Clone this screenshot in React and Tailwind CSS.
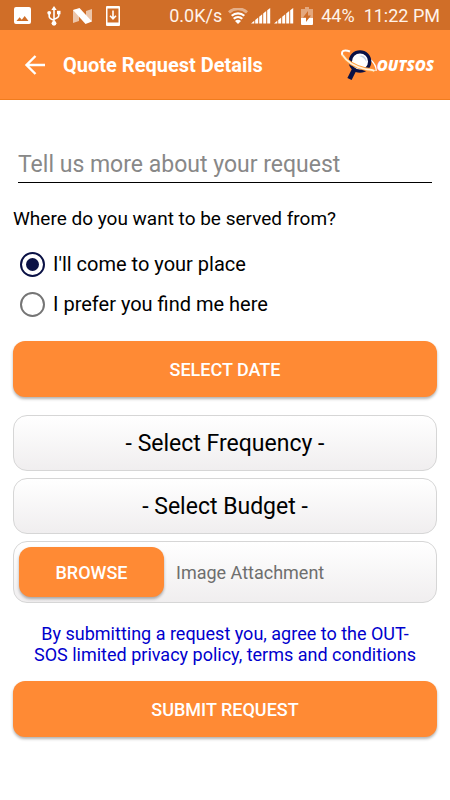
import { useRef, useState } from "react";

const places = [
  { value: "client", label: "I'll come to your place" },
  { value: "provider", label: "I prefer you find me here" },
];

const SignalIcon = () => (
  <svg className="h-4 w-5" viewBox="0 0 20 16" fill="#fff" aria-hidden="true">
    <path d="M0 15.500l3.300-2.800v2.800zM4.200 12l3-2.500v6H4.200zM8.200 8.800l3-2.500v9.200h-3zM12.200 5.500l3-2.500v12.500h-3zM16.200 2.300l3-2.300v15.500h-3z" />
  </svg>
);

const StatusBar = () => (
  <div className="flex h-[30px] items-center justify-between bg-[#d06e28] pt-px pr-[10px] pl-[14px] text-[18px] leading-5 text-[#fff3ea]">
    <div className="flex items-center">
      <svg className="h-[17px] w-[17px]" viewBox="0 0 17 17" aria-hidden="true">
        <path
          fill="#fff"
          fillRule="evenodd"
          d="M2 0h13a2 2 0 0 1 2 2v13a2 2 0 0 1-2 2H2a2 2 0 0 1-2-2V2a2 2 0 0 1 2-2zM2.500 14h12L10.700 9l-2.900 3.800L5.600 10.200z"
        />
      </svg>
      <svg
        className="ml-4 h-5 w-[14px]"
        viewBox="0 0 14 20"
        fill="#fff"
        aria-hidden="true"
      >
        <path d="M7 0l2.700 4H4.300z" />
        <path
          d="M7 3v14M2.200 7.500v3c0 1.600 1 2.500 4.800 3.800M11.800 7v2.500c0 1.600-1 2.500-4.800 3.700"
          fill="none"
          stroke="#fff"
          strokeWidth="1.600"
        />
        <circle cx="7" cy="17.300" r="2.400" />
        <circle cx="2.200" cy="6.800" r="1.900" />
        <path d="M10 4.800h3.500v3.500H10z" />
      </svg>
      <svg
        className="ml-3 h-4 w-[19px]"
        viewBox="0 0 19 16"
        fill="#fff"
        aria-hidden="true"
      >
        <path opacity="0.600" d="M0 2l6-1v12l-6 2zM13 3l6-2v12l-6 2z" />
        <path d="M0 2l6.500-2L19 13.500 12.500 16z" />
      </svg>
      <svg
        className="ml-[14px] h-5 w-[14px]"
        viewBox="0 0 14 20"
        aria-hidden="true"
      >
        <path
          fill="#fff"
          fillRule="evenodd"
          d="M1 0h12a1 1 0 0 1 1 1v18a1 1 0 0 1-1 1H1a1 1 0 0 1-1-1V1a1 1 0 0 1 1-1zM1.500 2.500v14h11v-14z"
        />
        <path
          d="M7 4.500v8M4 9.800l3 3 3-3"
          fill="none"
          stroke="#fff"
          strokeWidth="1.600"
        />
      </svg>
    </div>
    <div className="flex items-center">
      <span>0.0K/s</span>
      <svg
        className="ml-[6px] h-4 w-5"
        viewBox="0 0 20 16"
        fill="none"
        stroke="#fff"
        strokeWidth="2.200"
        aria-hidden="true"
      >
        <path opacity="0.450" d="M1 4.300a13.500 13.500 0 0 1 18 0" strokeWidth="3" />
        <path d="M3.700 7.800a9.500 9.500 0 0 1 12.600 0" />
        <path d="M5.700 10.800a6.500 6.500 0 0 1 8.600 0" />
        <path d="M7 13a4.500 4.500 0 0 1 6 0l-3 3z" fill="#fff" stroke="none" />
      </svg>
      <div className="ml-[3px] flex gap-[3px]">
        <SignalIcon />
        <SignalIcon />
      </div>
      <svg
        className="ml-[7px] h-[18px] w-3"
        viewBox="0 0 12 18"
        fill="#fff"
        aria-hidden="true"
      >
        <path opacity="0.400" d="M4 0h4v2h4v9H0V2h4z" />
        <path d="M0 11h12v6a1 1 0 0 1-1 1H1a1 1 0 0 1-1-1z" />
        <path fill="#d06e28" d="M7 4v4.500h3L5 15v-4.500H2z" />
      </svg>
      <span className="ml-2">44%</span>
      <span className="ml-[9px]">11:22 PM</span>
    </div>
  </div>
);

const Logo = () => (
  <div className="flex items-center" role="img" aria-label="Outsos">
    <svg className="h-8 w-9" viewBox="0 0 36 32" fill="none" aria-hidden="true">
      <path
        d="M9 2.500C3 0-.2 2 1.500 6.500"
        stroke="#fff"
        strokeWidth="2"
      />
      <path d="M30 11c3.500 3.500 5.500 7.500 5 11" stroke="#fff" strokeWidth="1.300" />
      <path d="M13.500 20L8.500 30" stroke="#0a1145" strokeWidth="4.800" />
      <circle cx="19" cy="12.500" r="9.700" fill="#fff" stroke="#0a1145" strokeWidth="3.300" />
      <path d="M18 7c4-2 8 1.500 7.500 6-2-3.500-4-5-7.500-6z" fill="#c9d4e6" />
      <path
        d="M1.500 6C6 13 15 18 24 20c4.500 1 7.500.5 9.500 2"
        stroke="#ff9d3c"
        strokeWidth="3.600"
      />
      <path
        d="M1.500 6C6 13 15 18 24 20c4.500 1 7.500.5 9.500 2"
        stroke="#fff1dc"
        strokeWidth="1.700"
      />
    </svg>
    <span className="font-['Open_Sans','Noto_Sans',sans-serif] text-[15px] leading-5 font-extrabold text-white italic">
      OUTSOS
    </span>
  </div>
);

const primaryButton =
  "rounded-xl bg-[#ff8a34] text-[18px] font-medium text-white uppercase shadow-[0_2px_3px_rgba(0,0,0,0.3)]";
const panel =
  "rounded-[14px] border border-[#d6d6d6] bg-linear-to-b from-white to-[#f0eeef]";
const selectBox =
  "h-14 w-full appearance-none pt-[2px] text-center text-[23px] [text-align-last:center]";

const App = () => {
  const [place, setPlace] = useState("client");
  const [fileName, setFileName] = useState("Image Attachment");
  const fileInput = useRef(null);

  return (
    <div className="min-h-screen bg-white font-[Roboto,sans-serif] text-black">
      <StatusBar />
      <header className="flex h-[70px] items-center border-b border-[#f07c1e] bg-[#ff8a34] pr-4 pl-6">
        <button type="button" aria-label="Back">
          <svg
            className="h-5 w-[21px]"
            viewBox="0 0 21 20"
            fill="none"
            stroke="#fff"
            strokeWidth="2.400"
            aria-hidden="true"
          >
            <path d="M21 10H3M11.500 1L2.500 10l9 9" />
          </svg>
        </button>
        <h1 className="ml-[18px] flex-1 text-[20px] font-bold text-white">
          Quote Request Details
        </h1>
        <Logo />
      </header>

      <form
        className="px-[13px] pt-[43px]"
        onSubmit={(e) => e.preventDefault()}
      >
        <div className="px-[5px]">
          <input
            type="text"
            aria-label="Tell us more about your request"
            placeholder="Tell us more about your request"
            className="block h-10 w-full border-b border-black pt-[3px] text-[23px] placeholder:text-[#888] focus:outline-none"
          />
        </div>

        <fieldset className="mt-6">
          <legend className="text-[19px] leading-6">
            Where do you want to be served from?
          </legend>
          <div className="mt-[13px]">
            {places.map(({ value, label }) => (
              <label
                key={value}
                className="flex h-10 items-center gap-2 pl-[7px] text-[20px]"
              >
                <input
                  type="radio"
                  name="place"
                  value={value}
                  checked={place === value}
                  onChange={() => setPlace(value)}
                  className="grid h-[25px] w-[25px] appearance-none place-content-center rounded-full border-2 border-[#757575] before:h-[13px] before:w-[13px] before:rounded-full checked:border-[#0a1145] checked:before:bg-[#0a1145]"
                />
                {label}
              </label>
            ))}
          </div>
        </fieldset>

        <button
          type="button"
          className={`${primaryButton} mt-[17px] block h-14 w-full`}
        >
          Select Date
        </button>

        <div className="mt-[18px] flex flex-col gap-[7px]">
          <select aria-label="Frequency" className={`${panel} ${selectBox}`}>
            <option>- Select Frequency -</option>
          </select>
          <select aria-label="Budget" className={`${panel} ${selectBox}`}>
            <option>- Select Budget -</option>
          </select>
          <div className={`${panel} flex items-center gap-3 p-[5px]`}>
            <button
              type="button"
              onClick={() => fileInput.current.click()}
              className={`${primaryButton} h-[50px] w-[145px]`}
            >
              Browse
            </button>
            <input
              ref={fileInput}
              type="file"
              accept="image/*"
              aria-label="Image attachment"
              className="hidden"
              onChange={(e) =>
                setFileName(e.target.files[0]?.name ?? "Image Attachment")
              }
            />
            <span className="text-[18px] text-[#6e6e6e]">{fileName}</span>
          </div>
        </div>

        <a
          href="#terms"
          className="mt-5 block text-center text-[18px] leading-[21px] text-[#0000cd]"
        >
          By submitting a request you, agree to the OUT-
          <br />
          SOS limited privacy policy, terms and conditions
        </a>

        <button
          type="submit"
          className={`${primaryButton} mt-4 mb-6 block h-14 w-full`}
        >
          Submit Request
        </button>
      </form>
    </div>
  );
};

export default App;
